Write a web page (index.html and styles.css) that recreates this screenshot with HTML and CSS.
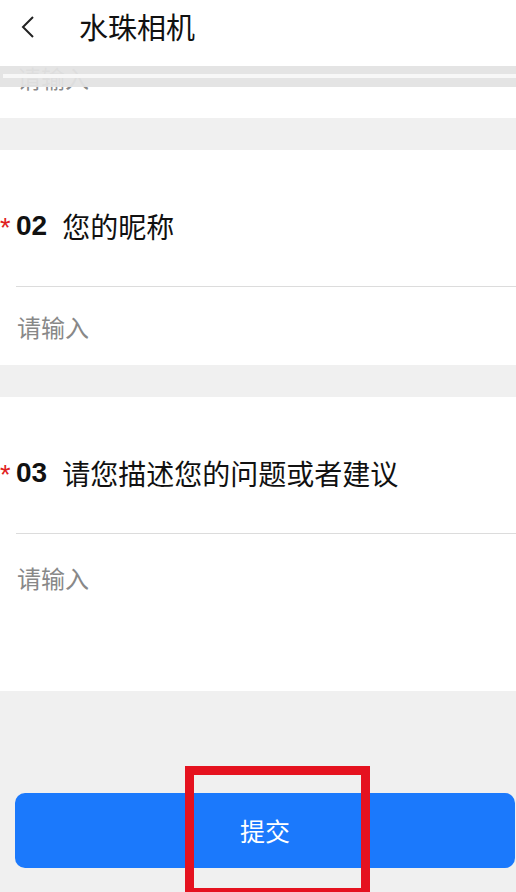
FILE: index.html
```html
<!DOCTYPE html>
<html lang="zh-CN">
<head>
<meta charset="utf-8">
<title>水珠相机</title>
<link rel="stylesheet" href="styles.css">
</head>
<body>
<div class="page">
  <header class="topbar">
    <svg class="back" width="14" height="24" viewBox="0 0 14 24"><path d="M12 2 L2 12 L12 22" fill="none" stroke="#222" stroke-width="2"/></svg>
    <h1 class="title">水珠相机</h1>
  </header>

  <section class="card card-first">
    <div class="shadow-band"><div class="band-line"></div></div>
    <div class="clipped">请输入</div>
  </section>

  <section class="card">
    <div class="label"><span class="star">*</span><span class="num">02</span><span class="text">您的昵称</span></div>
    <div class="divider"></div>
    <div class="input">请输入</div>
  </section>

  <section class="card card-last">
    <div class="label"><span class="star">*</span><span class="num">03</span><span class="text">请您描述您的问题或者建议</span></div>
    <div class="divider"></div>
    <div class="input textarea">请输入</div>
  </section>

  <div class="footer">
    <button class="submit">提交</button>
  </div>

  <div class="highlight"></div>
</div>
</body>
</html>
```

FILE: styles.css
```css
* { box-sizing: border-box; }
html, body { margin: 0; padding: 0; }
body {
  width: 516px;
  height: 892px;
  overflow: hidden;
  background: #f0f0f0;
  font-family: "Noto Sans CJK SC", "Noto Sans", sans-serif;
}
.page {
  position: relative;
  height: 892px;
  overflow: hidden;
  display: flex;
  flex-direction: column;
}
.page > * { flex-shrink: 0; }
.topbar {
  height: 66px;
  background: #fff;
  display: flex;
  align-items: center;
  padding-left: 21px;
  padding-bottom: 18px;
  padding-top: 4px;
}
.back { display: block; margin-top: 2px; }
.title {
  margin: 0 0 0 44px;
  font-size: 29px;
  font-weight: 400;
  color: #111;
  line-height: 40px;
}
.card {
  background: #fff;
  margin-bottom: 32px;
}
.card-last { margin-bottom: 0; }
.card-first {
  position: relative;
  height: 52px;
  overflow: hidden;
}
.shadow-band {
  position: absolute;
  left: 0; right: 0; top: 0;
  height: 21px;
  background: rgba(226,226,226,0.94);
  padding-top: 8px;
  padding-left: 3px;
}
.band-line {
  height: 4px;
  background: #f7f7f7;
}
.clipped {
  padding-left: 17px;
  margin-top: 0px;
  font-size: 24px;
  line-height: 24px;
  color: #888;
}
.label {
  display: flex;
  align-items: center;
  height: 136px;
  padding-top: 16px;
  color: #111;
}
.star {
  width: 16px;
  color: #e02020;
  font-family: "Liberation Sans", sans-serif;
  font-size: 27px;
  line-height: 20px;
  margin-left: 0;
  margin-top: 4px;
}
.num {
  font-family: "Liberation Sans", Arial, sans-serif;
  font-weight: 700;
  font-size: 28px;
  margin-right: 15px;
}
.text {
  font-size: 28px;
}
.divider {
  height: 1px;
  background: #dcdcdc;
  margin-left: 16px;
}
.input {
  height: 78px;
  display: flex;
  align-items: center;
  padding-left: 17px;
  font-size: 24px;
  color: #888;
}
.textarea {
  height: 157px;
  align-items: flex-start;
  padding-top: 26px;
}
.footer {
  flex: 1;
  padding: 102px 1px 0 15px;
}
.submit {
  width: 500px;
  height: 75px;
  border: none;
  border-radius: 10px;
  background: #1b79fc;
  color: #fff;
  font-family: "Noto Sans CJK SC", sans-serif;
  font-size: 25px;
  padding: 0 0 2px 0;
}
.highlight {
  position: absolute;
  left: 185px;
  top: 766px;
  width: 185px;
  height: 131px;
  border: 9px solid #e5121f;
}
```
